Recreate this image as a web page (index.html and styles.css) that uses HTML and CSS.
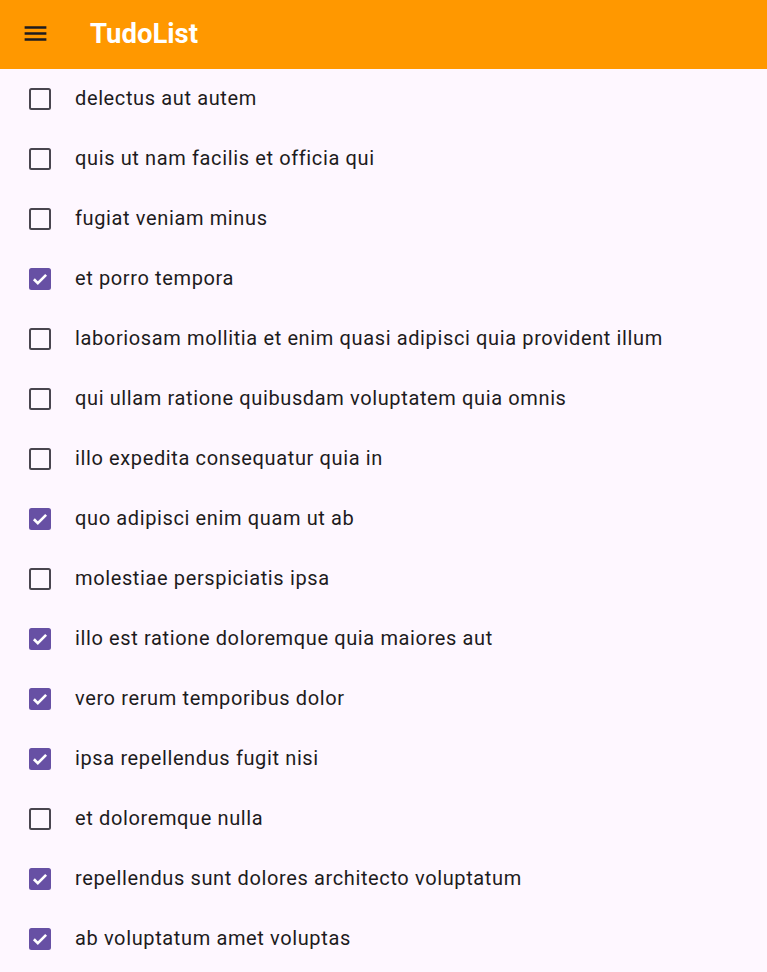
FILE: index.html
```html
<!DOCTYPE html>
<html lang="en">
<head>
<meta charset="utf-8">
<title>TudoList</title>
<link rel="stylesheet" href="styles.css">
</head>
<body>
<header class="appbar">
  <button class="menu-btn" aria-label="menu">
    <svg viewBox="0 0 24 24" width="29" height="29"><path d="M3 18h18v-2H3v2zm0-5h18v-2H3v2zm0-7v2h18V6H3z" fill="#1d1b20"/></svg>
  </button>
  <h1 class="title">TudoList</h1>
</header>
<ul class="list">
  <li class="row"><span class="cb"></span><span class="label">delectus aut autem</span></li>
  <li class="row"><span class="cb"></span><span class="label">quis ut nam facilis et officia qui</span></li>
  <li class="row"><span class="cb"></span><span class="label">fugiat veniam minus</span></li>
  <li class="row"><span class="cb checked"><svg viewBox="0 0 18 18"><path d="M4 9.2l3.2 3.2L14 5.6" fill="none" stroke="#fff" stroke-width="2.2"/></svg></span><span class="label">et porro tempora</span></li>
  <li class="row"><span class="cb"></span><span class="label">laboriosam mollitia et enim quasi adipisci quia provident illum</span></li>
  <li class="row"><span class="cb"></span><span class="label">qui ullam ratione quibusdam voluptatem quia omnis</span></li>
  <li class="row"><span class="cb"></span><span class="label">illo expedita consequatur quia in</span></li>
  <li class="row"><span class="cb checked"><svg viewBox="0 0 18 18"><path d="M4 9.2l3.2 3.2L14 5.6" fill="none" stroke="#fff" stroke-width="2.2"/></svg></span><span class="label">quo adipisci enim quam ut ab</span></li>
  <li class="row"><span class="cb"></span><span class="label">molestiae perspiciatis ipsa</span></li>
  <li class="row"><span class="cb checked"><svg viewBox="0 0 18 18"><path d="M4 9.2l3.2 3.2L14 5.6" fill="none" stroke="#fff" stroke-width="2.2"/></svg></span><span class="label">illo est ratione doloremque quia maiores aut</span></li>
  <li class="row"><span class="cb checked"><svg viewBox="0 0 18 18"><path d="M4 9.2l3.2 3.2L14 5.6" fill="none" stroke="#fff" stroke-width="2.2"/></svg></span><span class="label">vero rerum temporibus dolor</span></li>
  <li class="row"><span class="cb checked"><svg viewBox="0 0 18 18"><path d="M4 9.2l3.2 3.2L14 5.6" fill="none" stroke="#fff" stroke-width="2.2"/></svg></span><span class="label">ipsa repellendus fugit nisi</span></li>
  <li class="row"><span class="cb"></span><span class="label">et doloremque nulla</span></li>
  <li class="row"><span class="cb checked"><svg viewBox="0 0 18 18"><path d="M4 9.2l3.2 3.2L14 5.6" fill="none" stroke="#fff" stroke-width="2.2"/></svg></span><span class="label">repellendus sunt dolores architecto voluptatum</span></li>
  <li class="row"><span class="cb checked"><svg viewBox="0 0 18 18"><path d="M4 9.2l3.2 3.2L14 5.6" fill="none" stroke="#fff" stroke-width="2.2"/></svg></span><span class="label">ab voluptatum amet voluptas</span></li>
</ul>
</body>
</html>
```
FILE: styles.css
```css
* { box-sizing: border-box; }
html, body {
  margin: 0;
  padding: 0;
  background: #fef7ff;
  font-family: Roboto, "Noto Sans", sans-serif;
  overflow: hidden;
}
.appbar {
  height: 69px;
  background: #ff9800;
  display: flex;
  align-items: center;
  padding-left: 20px;
  padding-bottom: 2px;
}
.menu-btn {
  width: 30px;
  height: 30px;
  padding: 0;
  border: 0;
  background: none;
  display: flex;
  align-items: center;
  justify-content: center;
  margin-right: 40px;
}
.menu-btn svg { display: block; }
.title {
  margin: 0;
  color: #fff;
  font-size: 27.5px;
  font-weight: 700;
  letter-spacing: 0;
}
.list {
  list-style: none;
  margin: 0;
  padding: 0;
}
.row {
  height: 60px;
  display: flex;
  align-items: center;
  padding-left: 29px;
}
.cb {
  width: 22px;
  height: 22px;
  border: 2.5px solid #49454f;
  border-radius: 2.5px;
  margin-right: 24px;
  flex: none;
  display: flex;
}
.cb.checked {
  background: #6750a4;
  border-color: #6750a4;
}
.cb svg {
  margin: -2.5px;
  width: 22px;
  height: 22px;
}
.label {
  color: #1d1b20;
  font-size: 20px;
  letter-spacing: 0.625px;
  white-space: nowrap;
  margin-bottom: 2px;
}
```
